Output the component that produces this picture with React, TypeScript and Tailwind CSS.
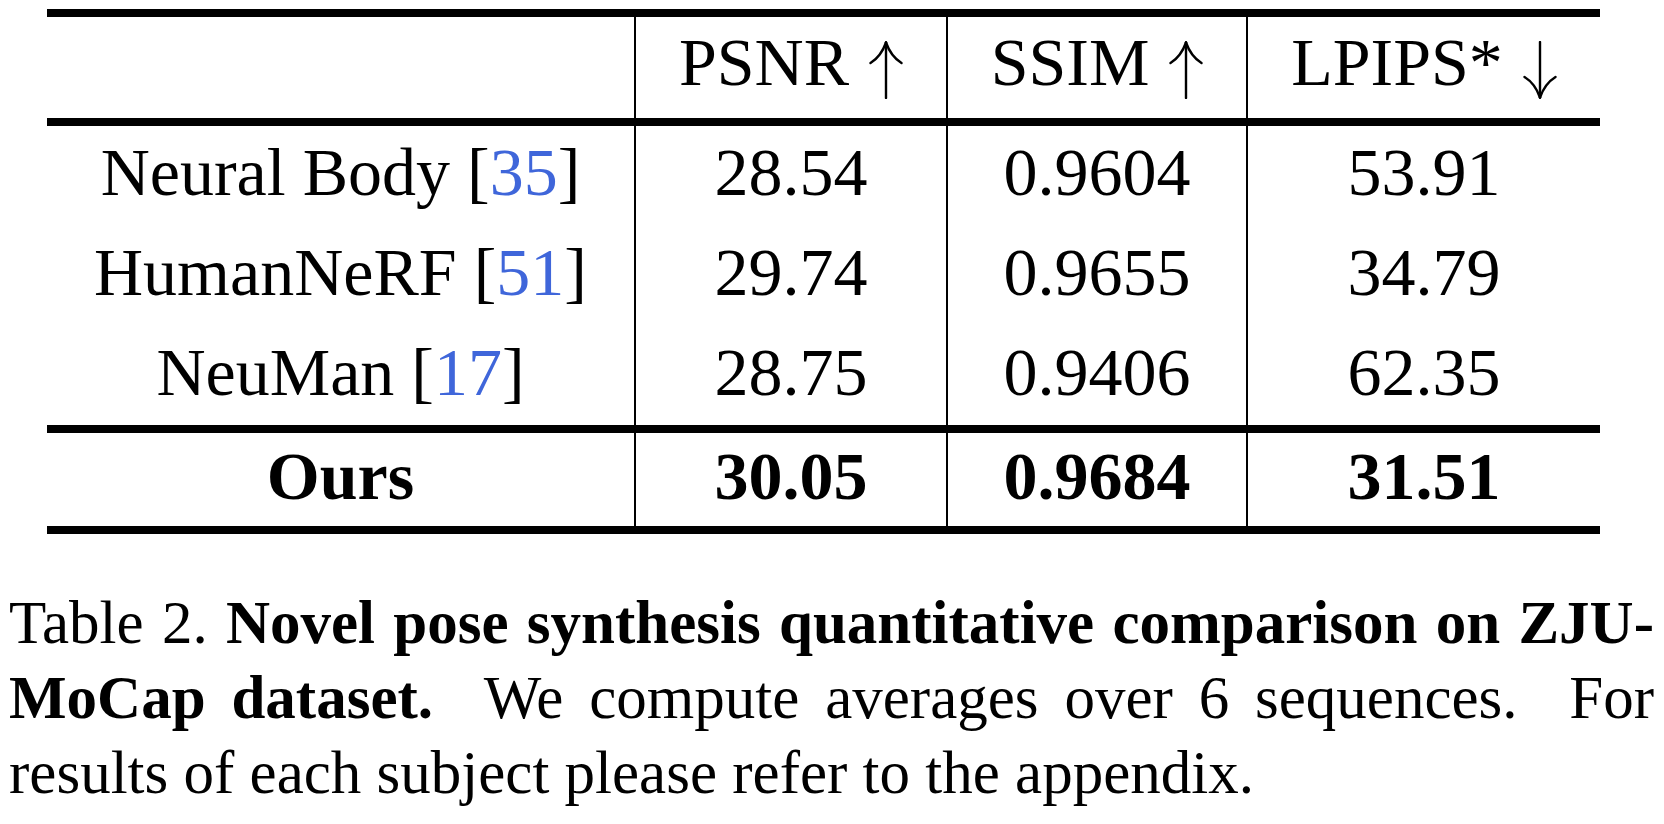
import React from "react";

const serif = { fontFamily: '"Liberation Serif", "Times New Roman", serif' };

function Cite({ n }: { n: string }) {
  return (
    <>
      [<span className="text-[#3f66da]">{n}</span>]
    </>
  );
}

function Arrow({ down }: { down?: boolean }) {
  return (
    <svg
      width="34"
      height="58"
      viewBox="0 0 34 58"
      className={"inline-block ml-[20px] align-[-14px] " + (down ? "rotate-180" : "")}
      fill="none"
      stroke="black"
      strokeWidth="2.4"
      strokeLinecap="round"
      strokeLinejoin="round"
    >
      <path d="M17 1.5 V57" />
      <path d="M17 1.5 C14 10 8 18 1.5 22" />
      <path d="M17 1.5 C20 10 26 18 32.5 22" />
    </svg>
  );
}

function Cell({
  children,
  first,
  bold,
}: {
  children?: React.ReactNode;
  first?: boolean;
  bold?: boolean;
}) {
  return (
    <div
      className={
        "flex items-center justify-center pb-2 leading-none whitespace-nowrap " +
        (first ? "" : "border-l-2 border-black ") +
        (bold ? "font-bold" : "")
      }
    >
      {children}
    </div>
  );
}

const rows: { name: React.ReactNode; v: string[] }[] = [
  { name: <>Neural Body <Cite n="35" /></>, v: ["28.54", "0.9604", "53.91"] },
  { name: <>HumanNeRF <Cite n="51" /></>, v: ["29.74", "0.9655", "34.79"] },
  { name: <>NeuMan <Cite n="17" /></>, v: ["28.75", "0.9406", "62.35"] },
];

export default function App() {
  return (
    <div className="w-[1664px] h-[824px] bg-white text-black overflow-hidden" style={serif}>
      <div className="ml-[47px] mt-[9px] w-[1553px] border-y-[8px] border-black text-[68px]">
        <div className="grid grid-cols-[587px_312px_300px_354px] h-[101px]">
          <Cell first />
          <Cell>
            <span>PSNR<Arrow /></span>
          </Cell>
          <Cell>
            <span>SSIM<Arrow /></span>
          </Cell>
          <Cell>
            <span>LPIPS*<Arrow down /></span>
          </Cell>
        </div>
        <div className="border-t-[8px] border-black">
          {rows.map((r, i) => (
            <div
              key={i}
              className={
                "grid grid-cols-[587px_312px_300px_354px] " +
                (i === 2 ? "h-[99px]" : "h-[100px]")
              }
            >
              <Cell first>{r.name}</Cell>
              {r.v.map((x, j) => (
                <Cell key={j}>{x}</Cell>
              ))}
            </div>
          ))}
        </div>
        <div className="border-t-[8px] border-black grid grid-cols-[587px_312px_300px_354px] h-[101px]">
          <Cell first bold>Ours</Cell>
          <Cell bold>30.05</Cell>
          <Cell bold>0.9684</Cell>
          <Cell bold>31.51</Cell>
        </div>
      </div>

      <div className="ml-[9px] mt-[51px] w-[1645px] text-[61px] leading-[75px]">
        <div className="text-justify [text-align-last:justify] whitespace-nowrap">
          Table 2. <b>Novel pose synthesis quantitative comparison on ZJU-</b>
        </div>
        <div className="text-justify [text-align-last:justify] whitespace-nowrap">
          <b>MoCap dataset.</b>&nbsp; We compute averages over 6 sequences.&nbsp; For
        </div>
        <div className="text-left whitespace-nowrap">
          results of each subject please refer to the appendix.
        </div>
      </div>
    </div>
  );
}
